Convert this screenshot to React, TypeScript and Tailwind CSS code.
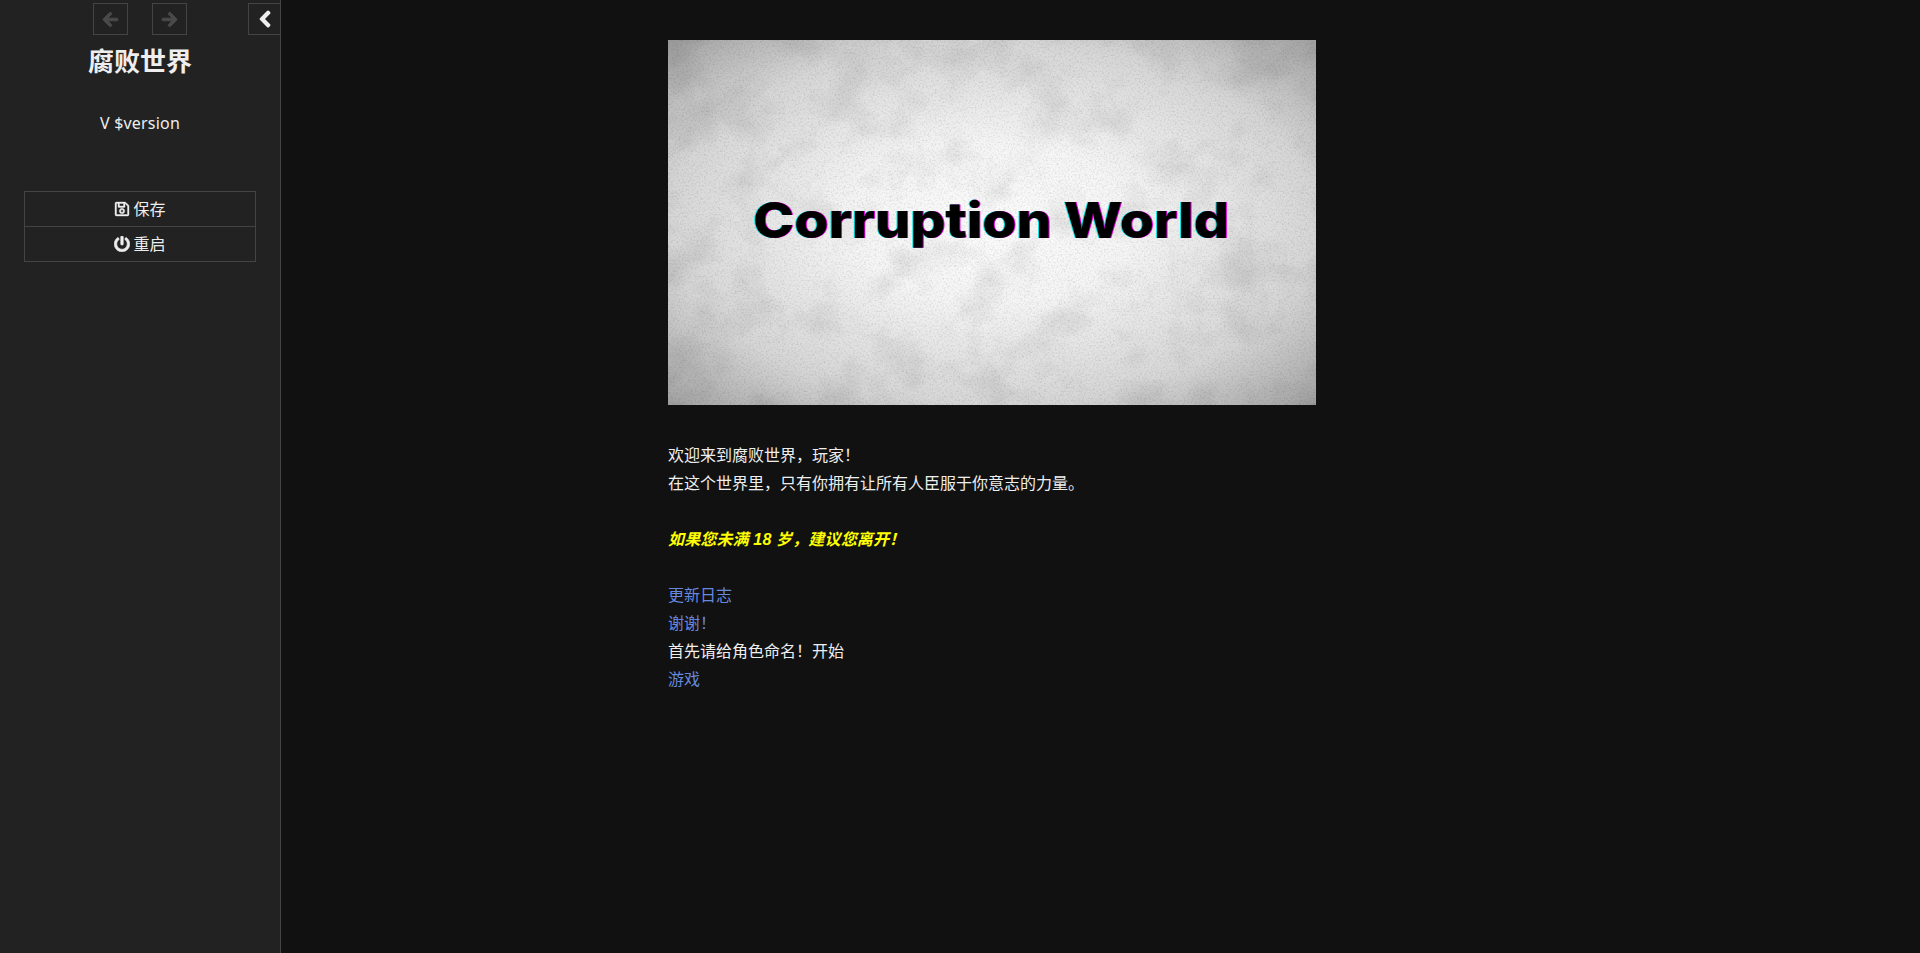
import React from 'react';
import { FaArrowLeft, FaArrowRight, FaChevronLeft, FaRegSave, FaPowerOff } from 'react-icons/fa';

const uiFont = "font-['Noto_Sans','Noto_Sans_CJK_SC',sans-serif]";

function CoverImage() {
  const title = { x: 85, y: 198, textLength: 476, fontFamily: "Inter, sans-serif", fontWeight: 800, fontSize: 50 };
  return (
    <svg width="648" height="365" viewBox="0 0 648 365" className="block">
      <defs>
        <filter id="grain" x="0" y="0" width="100%" height="100%">
          <feTurbulence type="fractalNoise" baseFrequency="0.55" numOctaves="3" seed="7" />
          <feColorMatrix type="matrix" values="0 0 0 0 0  0 0 0 0 0  0 0 0 0 0  1.8 0 0 0 -0.82" />
        </filter>
        <filter id="blotch" x="0" y="0" width="100%" height="100%">
          <feTurbulence type="fractalNoise" baseFrequency="0.02" numOctaves="5" seed="11" />
          <feColorMatrix type="matrix" values="0 0 0 0 0  0 0 0 0 0  0 0 0 0 0  1.6 0 0 0 -0.72" />
        </filter>
        <radialGradient id="vignette" cx="50%" cy="50%" r="72%">
          <stop offset="0%" stopColor="#fbfbfb" />
          <stop offset="30%" stopColor="#f5f5f5" />
          <stop offset="69%" stopColor="#d6d6d6" />
          <stop offset="100%" stopColor="#9e9e9e" />
        </radialGradient>
      </defs>
      <rect width="648" height="365" fill="url(#vignette)" />
      <rect width="648" height="365" filter="url(#blotch)" opacity="0.12" />
      <rect width="648" height="365" filter="url(#grain)" opacity="0.14" />
      <text {...title} lengthAdjust="spacingAndGlyphs" fill="#00e5e5" transform="translate(-1 0)">Corruption World</text>
      <text {...title} lengthAdjust="spacingAndGlyphs" fill="#e000e0" transform="translate(1 0)">Corruption World</text>
      <text {...title} lengthAdjust="spacingAndGlyphs" fill="#000">Corruption World</text>
    </svg>
  );
}

export default function App() {
  return (
    <div className={`flex min-h-[953px] bg-[#111] text-[#eee] text-base ${uiFont}`}>
      <aside className="w-[281px] shrink-0 bg-[#222] border-r border-[#444] flex flex-col">
        <div className="relative flex justify-center gap-6 pt-[3px]">
          <button className="w-[35px] h-8 border border-[#444] flex items-center justify-center text-[#4a4a4a]">
            <FaArrowLeft size={17} stroke="currentColor" strokeWidth={30} />
          </button>
          <button className="w-[35px] h-8 border border-[#444] flex items-center justify-center text-[#4a4a4a]">
            <FaArrowRight size={17} stroke="currentColor" strokeWidth={30} />
          </button>
          <button className="absolute right-0 top-[3px] w-8 h-8 border border-r-0 border-[#444] flex items-center justify-center text-[#eee]">
            <FaChevronLeft size={18} stroke="currentColor" strokeWidth={40} />
          </button>
        </div>
        <h1 className="mt-2 text-center text-[26px] leading-9 font-bold">腐败世界</h1>
        <p className="mt-[30px] text-center leading-7 tracking-[0.2px]">V $version</p>
        <nav className="mx-6 mt-[54px] flex flex-col border border-[#444]">
          <a className="h-[35px] flex items-center justify-center gap-[3px] border-b border-[#444]">
            <FaRegSave size={16} stroke="currentColor" strokeWidth={12} />
            保存
          </a>
          <a className="h-[34px] flex items-center justify-center gap-[3px]">
            <FaPowerOff size={16} stroke="currentColor" strokeWidth={20} />
            重启
          </a>
        </nav>
      </aside>
      <main className="flex-1 pl-[387px] pt-10">
        <CoverImage />
        <div className="mt-9 leading-7">
          <p>欢迎来到腐败世界，玩家！</p>
          <p>在这个世界里，只有你拥有让所有人臣服于你意志的力量。</p>
          <p className="mt-7 h-7 pt-px font-bold italic tracking-[0.15px] text-[#ff0] font-['Liberation_Sans','Noto_Sans_CJK_SC',sans-serif]">如果您未满 18 岁，建议您离开！</p>
          <p className="mt-7 text-[#68d]">更新日志</p>
          <p className="text-[#68d]">谢谢！</p>
          <p>首先请给角色命名！开始</p>
          <p className="text-[#68d]">游戏</p>
        </div>
      </main>
    </div>
  );
}
